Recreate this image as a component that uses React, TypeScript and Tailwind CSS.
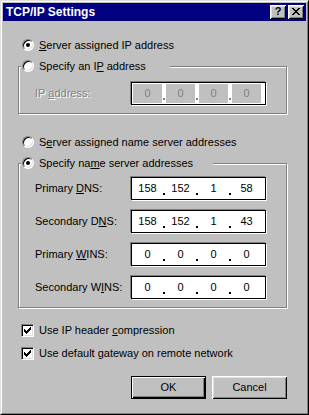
import { Fragment, type ReactNode } from "react";

const bevel =
  "shadow-[inset_1px_1px_0_#fff,inset_-1px_-1px_0_#000,inset_2px_2px_0_#dfdfdf,inset_-2px_-2px_0_#808080]";

function Radio({ checked }: { checked?: boolean }) {
  return (
    <span className="w-[12px] h-[12px] shrink-0 rounded-full bg-white border border-t-[#808080] border-l-[#808080] border-b-white border-r-white shadow-[inset_1px_1px_0_#000,inset_-1px_-1px_0_#dfdfdf] flex items-center justify-center">
      {checked && <span className="w-[4px] h-[4px] rounded-full bg-black" />}
    </span>
  );
}

function Check() {
  return (
    <span className="w-[13px] h-[13px] shrink-0 bg-white border border-t-[#808080] border-l-[#808080] border-b-white border-r-white shadow-[inset_1px_1px_0_#000,inset_-1px_-1px_0_#dfdfdf] flex items-center justify-center">
      <svg width="7" height="7" viewBox="0 0 7 7" shapeRendering="crispEdges">
        <path
          d="M6 0h1v1h-1z M5 1h2v1h-2z M0 2h1v1h-1z M4 2h3v1h-3z M0 3h2v1h-2z M3 3h3v1h-3z M0 4h5v1h-5z M1 5h3v1h-3z M2 6h1v1h-1z"
          fill="#000"
        />
      </svg>
    </span>
  );
}

function IpBox({ parts, disabled }: { parts: string[]; disabled?: boolean }) {
  return (
    <div className="w-[135px] h-[23px] shrink-0 bg-white border border-black shadow-[-1px_-1px_0_#808080,1px_1px_0_#fff] flex py-px pl-px pr-[4px]">
      {parts.map((p, i) => (
        <Fragment key={i}>
          {i > 0 && (
            <div className="w-[4px] flex items-end justify-center pb-[3px]">
              <span className={disabled ? "w-[2px] h-[2px] bg-[#808080]" : "w-[2px] h-[2px] bg-black"} />
            </div>
          )}
          <div
            className={
              disabled
                ? "w-[29px] flex items-center justify-center bg-[#c0c0c0] text-[#808080]"
                : "w-[29px] flex items-center justify-center"
            }
          >
            {p}
          </div>
        </Fragment>
      ))}
    </div>
  );
}

function Row({ label, parts, disabled, first }: { label: ReactNode; parts: string[]; disabled?: boolean; first?: boolean }) {
  return (
    <div className={first ? "flex items-center pl-[16px] mt-[6px]" : "flex items-center pl-[16px] mt-[10px]"}>
      <span
        className={
          disabled ? "w-[96px] text-[#808080] [text-shadow:1px_1px_0_#fff]" : "w-[96px]"
        }
      >
        {label}
      </span>
      <IpBox parts={parts} disabled={disabled} />
    </div>
  );
}

function Button({ label, primary }: { label: string; primary?: boolean }) {
  return (
    <button
      className={
        primary
          ? "w-[75px] h-[23px] bg-[#c0c0c0] border border-black shadow-[inset_1px_1px_0_#fff,inset_-1px_-1px_0_#000,inset_-2px_-2px_0_#808080] text-[11px]"
          : `w-[75px] h-[23px] bg-[#c0c0c0] ${bevel} text-[11px]`
      }
    >
      {label}
    </button>
  );
}

export default function App() {
  return (
    <div className="w-[309px] h-[415px] bg-[#c0c0c0] font-['Liberation_Sans',Arial,sans-serif] text-[11px] leading-none text-black select-none">
      <div className="h-full border border-t-[#dfdfdf] border-l-[#dfdfdf] border-r-black border-b-black">
        <div className="h-full border border-t-white border-l-white border-r-[#808080] border-b-[#808080] p-px flex flex-col">
          {/* title bar */}
          <div className="h-[18px] bg-[#000080] flex items-center pl-[3px] pr-[2px]">
            <span className="flex-1 text-white font-bold text-[12px]">TCP/IP Settings</span>
            <div className="flex gap-[2px]">
              <span className={`w-[16px] h-[14px] bg-[#c0c0c0] ${bevel} flex items-center justify-center font-bold text-[11px] pb-px`}>
                ?
              </span>
              <span className={`w-[16px] h-[14px] bg-[#c0c0c0] ${bevel} flex items-center justify-center pb-px`}>
                <svg width="8" height="7" viewBox="0 0 8 7" shapeRendering="crispEdges">
                  <path
                    d="M0 0h2v1h-2z M6 0h2v1h-2z M1 1h2v1h-2z M5 1h2v1h-2z M2 2h4v1h-4z M3 3h2v1h-2z M2 4h4v1h-4z M1 5h2v1h-2z M5 5h2v1h-2z M0 6h2v1h-2z M6 6h2v1h-2z"
                    fill="#000"
                  />
                </svg>
              </span>
            </div>
          </div>

          <div className="pl-[15px] w-[284px] flex flex-col">
            <div className="mt-[16px] h-[16px] flex items-center gap-[5px] pl-[4px]">
              <Radio checked />
              <span>
                <u>S</u>erver assigned IP address
              </span>
            </div>

            <fieldset className="mt-[5px] border border-[#808080] shadow-[inset_1px_1px_0_#fff,1px_1px_0_#fff] pb-[8px]">
              <legend className="ml-[2px] w-[149px] bg-[#c0c0c0]">
                <div className="h-[16px] flex items-center gap-[5px] pl-px">
                  <Radio />
                  <span>
                    Specify an I<u>P</u> address
                  </span>
                </div>
              </legend>
              <div className="mt-[8px] flex items-center pl-[16px]">
                <span className="w-[96px] text-[#808080] [text-shadow:1px_1px_0_#fff]">
                  IP <u>a</u>ddress:
                </span>
                <IpBox parts={["0", "0", "0", "0"]} disabled />
              </div>
            </fieldset>

            <div className="mt-[20px] h-[16px] flex items-center gap-[5px] pl-[4px]">
              <Radio />
              <span>
                S<u>e</u>rver assigned name server addresses
              </span>
            </div>

            <fieldset className="mt-[5px] border border-[#808080] shadow-[inset_1px_1px_0_#fff,1px_1px_0_#fff] pb-[8px]">
              <legend className="ml-[2px] w-[192px] bg-[#c0c0c0]">
                <div className="h-[16px] flex items-center gap-[5px] pl-px">
                  <Radio checked />
                  <span>
                    Specify na<u>m</u>e server addresses
                  </span>
                </div>
              </legend>
              <Row
                first
                label={
                  <>
                    Primary <u>D</u>NS:
                  </>
                }
                parts={["158", "152", "1", "58"]}
              />
              <Row
                label={
                  <>
                    Secondary D<u>N</u>S:
                  </>
                }
                parts={["158", "152", "1", "43"]}
              />
              <Row
                label={
                  <>
                    Primary <u>W</u>INS:
                  </>
                }
                parts={["0", "0", "0", "0"]}
              />
              <Row
                label={
                  <>
                    Secondary W<u>I</u>NS:
                  </>
                }
                parts={["0", "0", "0", "0"]}
              />
            </fieldset>

            <div className="mt-[14px] h-[16px] flex items-center gap-[5px] pl-[3px]">
              <Check />
              <span>
                Use IP header <u>c</u>ompression
              </span>
            </div>
            <div className="mt-[7px] h-[16px] flex items-center gap-[5px] pl-[3px]">
              <Check />
              <span>
                Use default <u>g</u>ateway on remote network
              </span>
            </div>

            <div className="mt-[15px] flex justify-end gap-[6px]">
              <Button label="OK" primary />
              <Button label="Cancel" />
            </div>
          </div>
        </div>
      </div>
    </div>
  );
}
